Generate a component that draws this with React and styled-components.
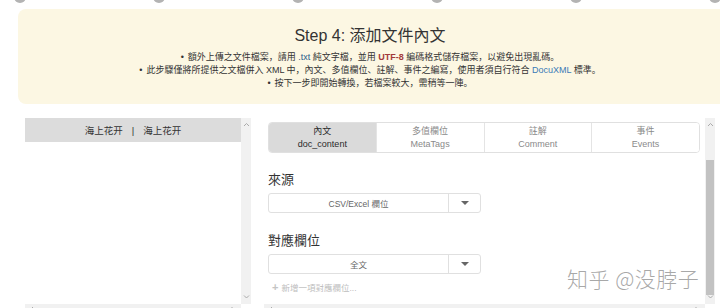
import styled, { createGlobalStyle } from "styled-components";

const GlobalStyle = createGlobalStyle`
  html, body {
    margin: 0;
    padding: 0;
    background: #fff;
    overflow: hidden;
  }
  body {
    font-family: "Liberation Sans", "Noto Sans CJK SC", sans-serif;
    color: #333;
  }
`;

const Page = styled.div`
  width: 720px;
  height: 308px;
  overflow: hidden;
  position: relative;
`;

const Steps = styled.div`
  display: flex;
  gap: 127px;
  padding-left: 14px;
  height: 3px;
`;

const Dot = styled.span`
  width: 12px;
  height: 12px;
  margin-top: -9px;
  border-radius: 50%;
  background: #b3b3b3;
  flex: none;
`;

const Alert = styled.div`
  margin: 6px 0 0 18px;
  width: 712px;
  height: 95px;
  box-sizing: border-box;
  border-radius: 8px;
  background: #fcf7e3;
  padding: 17px 8px 0 0;
  text-align: center;
`;

const Title = styled.h2`
  margin: 0 0 5px;
  font-size: 16px;
  line-height: 20px;
  font-weight: normal;
  color: #333;
`;

const Bullet = styled.div`
  font-size: 9px;
  line-height: 13px;
  color: #333;
  white-space: nowrap;
  &::before {
    content: "•";
    margin-right: 4px;
  }
`;

const Code = styled.span`
  color: #2b5d8a;
`;

const Strong = styled.b`
  color: #a33a3a;
`;

const Link = styled.span`
  color: #3a7ab7;
`;

const Main = styled.div`
  display: flex;
  gap: 13px;
  margin-top: 14px;
  padding-left: 25px;
`;

const Pane = styled.div`
  display: grid;
  grid-template-columns: ${(p) => p.$w}px 10px;
  grid-template-rows: 186px 12px;
  position: relative;
`;

const PaneBody = styled.div`
  background: #fff;
  padding: ${(p) => p.$pad || "0"};
  overflow: hidden;
`;

const VScroll = styled.div`
  background: #f1f1f1;
  display: flex;
  flex-direction: column;
  align-items: center;
  justify-content: space-between;
  padding: 4px 0 3px;
  box-sizing: border-box;
  position: relative;
`;

const Thumb = styled.div`
  position: absolute;
  left: 1px;
  right: 1px;
  top: ${(p) => p.$top}px;
  height: ${(p) => p.$h}px;
  background: #c2c2c2;
`;

const HScroll = styled.div`
  background: #f1f1f1;
  display: flex;
  align-items: flex-start;
  justify-content: space-between;
  padding: 2px 4px 0;
`;

const Arrow = ({ dir }) => {
  const pts = {
    up: "1,4 3.5,1.5 6,4",
    down: "1,1.5 3.5,4 6,1.5",
    left: "4,1 1.5,3.5 4,6",
    right: "1.5,1 4,3.5 1.5,6",
  }[dir];
  return (
    <svg width="7" height="7" viewBox="0 0 7 7">
      <polyline points={pts} fill="none" stroke="#a3a3a3" strokeWidth="0.9" />
    </svg>
  );
};

const ListHeader = styled.div`
  height: 24px;
  background: #dcdcdc;
  display: flex;
  align-items: center;
  justify-content: center;
  font-size: 9.5px;
  color: #333;
`;

const Sep = styled.span`
  margin: 0 9px;
`;

const Tabs = styled.div`
  display: flex;
  width: 432px;
  height: 31px;
  box-sizing: border-box;
  border: 1px solid #e0e0e0;
  border-radius: 4px;
  overflow: hidden;
`;

const Tab = styled.div`
  flex: 1;
  display: flex;
  flex-direction: column;
  align-items: center;
  justify-content: center;
  font-size: 9px;
  line-height: 12.5px;
  background: ${(p) => (p.$active ? "#dadada" : "#fff")};
  color: ${(p) => (p.$active ? "#2a2a2a" : "#8a8a8a")};
  & + & {
    border-left: 1px solid #e4e4e4;
  }
`;

const Heading = styled.div`
  font-size: 13px;
  line-height: 17px;
  color: #333;
  margin: ${(p) => p.$mt}px 0 5px;
`;

const Select = styled.div`
  display: flex;
  width: 213px;
  height: 20px;
  box-sizing: border-box;
  border: 1px solid #e0e0e0;
  border-radius: 3px;
  font-size: 8.5px;
  color: #666;
`;

const SelectLabel = styled.div`
  flex: 1;
  display: flex;
  align-items: center;
  justify-content: center;
`;

const Caret = styled.div`
  width: 31px;
  border-left: 1px solid #e0e0e0;
  display: flex;
  align-items: center;
  justify-content: center;
  &::after {
    content: "";
    border-left: 4px solid transparent;
    border-right: 4px solid transparent;
    border-top: 4px solid #666;
  }
`;

const AddLink = styled.div`
  margin-top: 7px;
  padding-left: 4px;
  font-size: 8.5px;
  color: #bdbdbd;
  display: flex;
  align-items: center;
  gap: 3px;
`;

const Plus = styled.span`
  font-size: 11px;
  font-weight: bold;
  color: #c4c4c4;
`;

const Watermark = styled.div`
  position: absolute;
  left: 303px;
  top: 148px;
  font-family: "Noto Sans CJK SC", sans-serif;
  font-weight: 300;
  font-size: 21px;
  line-height: 24px;
  color: rgba(140, 140, 140, 0.75);
  letter-spacing: 0.5px;
  white-space: nowrap;
`;

const tabs = [
  { zh: "內文", en: "doc_content", active: true },
  { zh: "多值欄位", en: "MetaTags" },
  { zh: "註解", en: "Comment" },
  { zh: "事件", en: "Events" },
];

export default function App() {
  return (
    <Page>
      <GlobalStyle />
      <Steps>
        {[0, 1, 2, 3, 4, 5].map((i) => (
          <Dot key={i} />
        ))}
      </Steps>
      <Alert>
        <Title>Step 4: 添加文件內文</Title>
        <Bullet>
          額外上傳之文件檔案，請用 <Code>.txt</Code> 純文字檔，並用 <Strong>UTF-8</Strong> 編碼格式儲存檔案，以避免出現亂碼。
        </Bullet>
        <Bullet>
          此步驟僅將所提供之文檔併入 XML 中，內文、多值欄位、註解、事件之編寫，使用者須自行符合 <Link>DocuXML</Link> 標準。
        </Bullet>
        <Bullet>按下一步即開始轉換，若檔案較大，需稍等一陣。</Bullet>
      </Alert>
      <Main>
        <Pane $w={216}>
          <PaneBody>
            <ListHeader>
              海上花开<Sep>|</Sep>海上花开
            </ListHeader>
          </PaneBody>
          <VScroll>
            <Arrow dir="up" />
            <Arrow dir="down" />
          </VScroll>
          <HScroll>
            <Arrow dir="left" />
            <Arrow dir="right" />
          </HScroll>
        </Pane>
        <Pane $w={441}>
          <PaneBody $pad="4px 0 0 4px">
            <Tabs>
              {tabs.map((t) => (
                <Tab key={t.en} $active={t.active}>
                  <span>{t.zh}</span>
                  <span>{t.en}</span>
                </Tab>
              ))}
            </Tabs>
            <Heading $mt={18}>來源</Heading>
            <Select>
              <SelectLabel>CSV/Excel 欄位</SelectLabel>
              <Caret />
            </Select>
            <Heading $mt={19}>對應欄位</Heading>
            <Select>
              <SelectLabel>全文</SelectLabel>
              <Caret />
            </Select>
            <AddLink>
              <Plus>+</Plus>新增一項對應欄位...
            </AddLink>
          </PaneBody>
          <VScroll>
            <Arrow dir="up" />
            <Thumb $top={42} $h={135} />
            <Arrow dir="down" />
          </VScroll>
          <HScroll>
            <Arrow dir="left" />
            <Arrow dir="right" />
          </HScroll>
          <Watermark>知乎 @没脖子</Watermark>
        </Pane>
      </Main>
    </Page>
  );
}
